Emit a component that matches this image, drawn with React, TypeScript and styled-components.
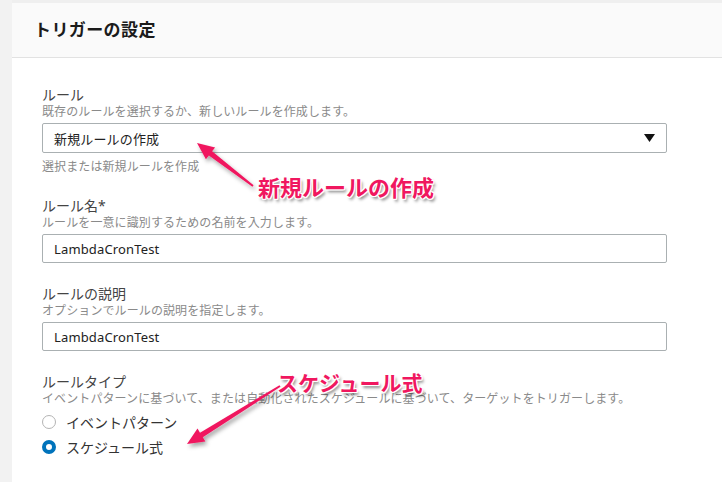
import React from "react";
import styled, { createGlobalStyle } from "styled-components";

const Global = createGlobalStyle`
  html, body { margin: 0; padding: 0; background: #f2f2f2; }
  body { font-family: "Noto Sans", "Noto Sans CJK JP", sans-serif; overflow: hidden; }
  * { box-sizing: border-box; }
`;

const Page = styled.div`
  position: relative;
  display: flex;
  width: 722px;
  height: 482px;
  overflow: hidden;
`;

const Side = styled.div`
  width: 12px;
  flex: none;
  background: #f2f2f2;
`;

const Panel = styled.div`
  flex: 1;
  background: #fff;
  display: flex;
  flex-direction: column;
`;

const Header = styled.div`
  height: 58px;
  flex: none;
  background: #fafafa;
  border-top: 3px solid #efefef;
  border-bottom: 1px solid #e2e2e2;
  display: flex;
  align-items: center;
  padding: 0 0 4px 22px;
`;

const Title = styled.h2`
  margin: 0;
  font-size: 17px;
  font-weight: 700;
  color: #1b1b1b;
  letter-spacing: 0.4px;
`;

const Body = styled.div`
  padding: 28px 55px 0 30px;
  display: flex;
  flex-direction: column;
  gap: 22px;
`;

const Field = styled.div`
  display: flex;
  flex-direction: column;
`;

const Label = styled.div`
  font-size: 14px;
  line-height: 17px;
  color: #444;
`;

const Desc = styled.div`
  font-size: 12px;
  line-height: 17px;
  color: #8a8a8a;
  letter-spacing: 0.1px;
`;

const Hint = styled(Desc)`
  margin-top: 5px;
`;

const Box = styled.div<{ $h?: number }>`
  margin-top: 3px;
  height: ${(p) => p.$h ?? 29}px;
  border: 1px solid #aab0b2;
  border-radius: 2px;
  display: flex;
  align-items: center;
  justify-content: space-between;
  padding: 0 11px 0 11px;
  font-size: 13px;
  letter-spacing: 0.15px;
  color: #222;
  background: #fff;
`;

const RadioList = styled.div`
  display: flex;
  flex-direction: column;
  margin-top: 2px;
`;

const RadioRow = styled.div`
  height: 25px;
  display: flex;
  align-items: center;
  gap: 10px;
  font-size: 14px;
  color: #333;
`;

const RadioDot = styled.span<{ $on?: boolean }>`
  width: 14px;
  height: 14px;
  border-radius: 50%;
  flex: none;
  background: #fff;
  border: ${(p) => (p.$on ? "4px solid #0073bb" : "1px solid #b4b4b4")};
`;

const Callout = styled.div<{ $x: number; $y: number; $size: number }>`
  position: absolute;
  left: ${(p) => p.$x}px;
  top: ${(p) => p.$y}px;
  font-size: ${(p) => p.$size}px;
  font-weight: 700;
  color: #f0175f;
  white-space: nowrap;
  line-height: 1;
  text-shadow:
    -1px -1px 0 #fff, 1px -1px 0 #fff, -1px 1px 0 #fff, 1px 1px 0 #fff,
    0 -1px 0 #fff, 0 1px 0 #fff, -1px 0 0 #fff, 1px 0 0 #fff,
    2px 3px 3px rgba(0, 0, 0, 0.45);
`;

const Overlay = styled.svg`
  position: absolute;
  left: 0;
  top: 0;
  pointer-events: none;
`;

function Arrow({ x1, y1, x2, y2 }: { x1: number; y1: number; x2: number; y2: number }) {
  const dx = x2 - x1;
  const dy = y2 - y1;
  const len = Math.hypot(dx, dy);
  const ux = dx / len;
  const uy = dy / len;
  const px = -uy;
  const py = ux;
  const head = 17;
  const hw = 7.5;
  const bx = x2 - ux * head;
  const by = y2 - uy * head;
  const pts = [
    [x1 + px * 1, y1 + py * 1],
    [bx + px * 2.6, by + py * 2.6],
    [bx + px * hw, by + py * hw],
    [x2, y2],
    [bx - px * hw, by - py * hw],
    [bx - px * 2.6, by - py * 2.6],
    [x1 - px * 1, y1 - py * 1],
  ]
    .map((p) => p.map((v) => v.toFixed(1)).join(","))
    .join(" ");
  return <polygon points={pts} fill="#f0175f" filter="url(#shadow)" />;
}

export default function App() {
  return (
    <>
      <Global />
      <Page>
        <Side />
        <Panel>
          <Header>
            <Title>トリガーの設定</Title>
          </Header>
          <Body>
            <Field>
              <Label>ルール</Label>
              <Desc>既存のルールを選択するか、新しいルールを作成します。</Desc>
              <Box $h={30}>
                <span>新規ルールの作成</span>
                <svg width="11" height="8" viewBox="0 0 11 8">
                  <path d="M0 0 H11 L5.5 8 Z" fill="#111" />
                </svg>
              </Box>
              <Hint>選択または新規ルールを作成</Hint>
            </Field>
            <Field>
              <Label>ルール名*</Label>
              <Desc>ルールを一意に識別するための名前を入力します。</Desc>
              <Box>LambdaCronTest</Box>
            </Field>
            <Field>
              <Label>ルールの説明</Label>
              <Desc>オプションでルールの説明を指定します。</Desc>
              <Box>LambdaCronTest</Box>
            </Field>
            <Field>
              <Label>ルールタイプ</Label>
              <Desc>
                イベントパターンに基づいて、または自動化されたスケジュールに基づいて、ターゲットをトリガーします。
              </Desc>
              <RadioList>
                <RadioRow>
                  <RadioDot />
                  イベントパターン
                </RadioRow>
                <RadioRow>
                  <RadioDot $on />
                  スケジュール式
                </RadioRow>
              </RadioList>
            </Field>
            <Field>
              <Label>スケジュールパターン</Label>
            </Field>
          </Body>
        </Panel>
        <Overlay width="722" height="482" viewBox="0 0 722 482">
          <defs>
            <filter id="shadow" x="-20%" y="-20%" width="140%" height="140%">
              <feDropShadow dx="2" dy="3" stdDeviation="2" floodColor="#000" floodOpacity="0.35" />
            </filter>
          </defs>
          <Arrow x1={253} y1={186} x2={197} y2={143} />
          <Arrow x1={280} y1={386} x2={187} y2={444} />
        </Overlay>
        <Callout $x={258} $y={176} $size={22}>新規ルールの作成</Callout>
        <Callout $x={277} $y={373} $size={21}>スケジュール式</Callout>
      </Page>
    </>
  );
}
